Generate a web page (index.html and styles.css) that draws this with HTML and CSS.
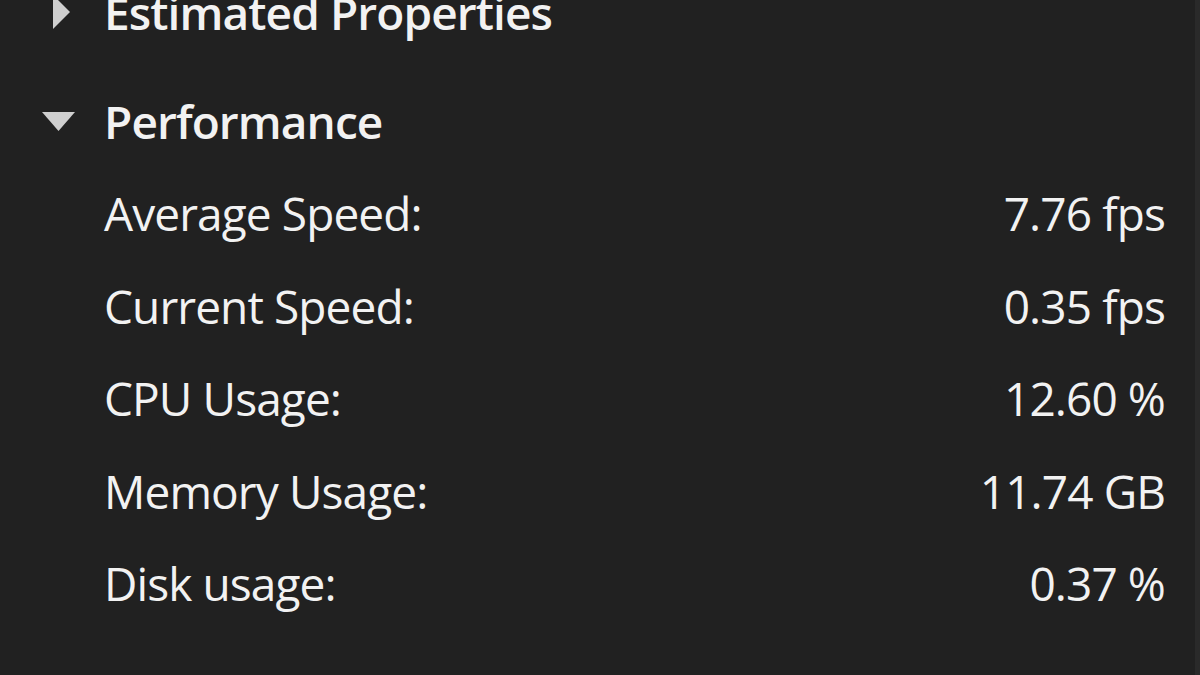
FILE: index.html
```html
<!DOCTYPE html>
<html>
<head>
<meta charset="utf-8">
<link rel="stylesheet" href="styles.css">
</head>
<body>
<div class="panel">
  <div class="section collapsed">
    <div class="header">
      <span class="toggle"><svg width="40" height="40" viewBox="0 0 40 40"><path d="M13 3 L30 20 L13 37 Z" fill="#cfcfcf"/></svg></span>
      <span class="title">Estimated Properties</span>
    </div>
  </div>
  <div class="section">
    <div class="header">
      <span class="toggle"><svg width="40" height="40" viewBox="0 0 40 40"><path d="M2 11 L35 11 L18.5 30 Z" fill="#cfcfcf"/></svg></span>
      <span class="title">Performance</span>
    </div>
    <div class="row"><span class="label">Average Speed:</span><span class="value">7.76 fps</span></div>
    <div class="row"><span class="label">Current Speed:</span><span class="value">0.35 fps</span></div>
    <div class="row"><span class="label">CPU Usage:</span><span class="value">12.60 %</span></div>
    <div class="row"><span class="label">Memory Usage:</span><span class="value">11.74 GB</span></div>
    <div class="row"><span class="label">Disk usage:</span><span class="value">0.37 %</span></div>
  </div>
</div>
</body>
</html>
```

FILE: styles.css
```css
html, body {
  margin: 0;
  padding: 0;
  height: 100%;
  overflow: hidden;
  background: #212121;
}
body {
  font-family: "Open Sans", "Noto Sans", sans-serif;
  color: #f2f2f2;
  font-size: 46px;
  letter-spacing: -0.9px;
}
.panel {
  margin-top: -34px;
  padding-right: 30px;
  border-right: 5px solid #2a2a2a;
  height: calc(100% + 34px);
  box-sizing: border-box;
  display: flex;
  flex-direction: column;
}
.section {
  display: flex;
  flex-direction: column;
}
.collapsed {
  margin-bottom: 16px;
}
.header {
  display: flex;
  align-items: center;
  height: 92.5px;
  line-height: 92.5px;
}
.toggle {
  width: 104px;
  flex: none;
  display: flex;
  align-items: center;
  padding-left: 40px;
  box-sizing: border-box;
}
.toggle svg {
  display: block;
}
.title {
  font-weight: 600;
}
.row {
  display: flex;
  justify-content: space-between;
  padding-left: 104px;
  height: 92.5px;
  line-height: 92.5px;
}
.collapsed + .section .row:first-of-type {
  margin-top: 1.5px;
}
```
